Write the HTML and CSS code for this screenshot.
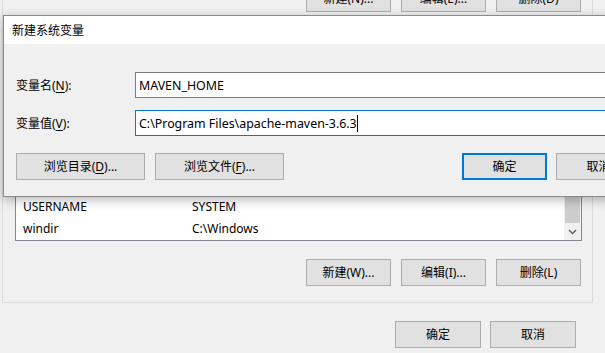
FILE: index.html
```html
<!DOCTYPE html>
<html lang="zh-CN">
<head>
<meta charset="utf-8">
<title>新建系统变量</title>
<link rel="stylesheet" href="styles.css">
</head>
<body>
<div class="window">
  <div class="group">
    <div class="btn-row top-row">
      <button class="btn">新建(N)...</button>
      <button class="btn">编辑(E)...</button>
      <button class="btn">删除(D)</button>
    </div>
    <div class="list">
      <div class="list-rows">
        <div class="row"><span class="c1">USERNAME</span><span class="c2">SYSTEM</span></div>
        <div class="row"><span class="c1">windir</span><span class="c2">C:\Windows</span></div>
      </div>
      <div class="scrollbar">
        <div class="thumb"></div>
        <div class="arrow">
          <svg width="9" height="6" viewBox="0 0 9 6"><polyline points="1,1 4.5,4.5 8,1" fill="none" stroke="#606060" stroke-width="1.5"/></svg>
        </div>
      </div>
    </div>
    <div class="btn-row mid-row">
      <button class="btn">新建(W)...</button>
      <button class="btn">编辑(I)...</button>
      <button class="btn">删除(L)</button>
    </div>
  </div>
  <div class="btn-row bottom-row">
    <button class="btn">确定</button>
    <button class="btn">取消</button>
  </div>
</div>

<div class="dialog">
  <div class="title">新建系统变量</div>
  <div class="dialog-body">
    <div class="field">
      <label class="label">变量名(<u>N</u>):</label>
      <div class="input">MAVEN_HOME</div>
    </div>
    <div class="field">
      <label class="label">变量值(<u>V</u>):</label>
      <div class="input focused">C:\Program Files\apache-maven-3.6.3<span class="caret"></span></div>
    </div>
    <div class="dialog-buttons">
      <div class="left-buttons">
        <button class="btn wide">浏览目录(<u>D</u>)...</button>
        <button class="btn wide">浏览文件(<u>F</u>)...</button>
      </div>
      <div class="right-buttons">
        <button class="btn default">确定</button>
        <button class="btn">取消</button>
      </div>
    </div>
  </div>
</div>
</body>
</html>
```

FILE: styles.css
```css
html, body {
  margin: 0;
  padding: 0;
  overflow: hidden;
}
body {
  width: 605px;
  height: 353px;
  background: #f0f0f0;
  position: relative;
  font-family: "Noto Sans", "Noto Sans CJK SC", sans-serif;
  font-size: 12px;
  color: #000;
}
.window {
  padding: 1px 12px 0 2px;
}
.group {
  margin-top: -41px;
  border: 1px solid #dcdcdc;
  padding: 24px 11px 16px 12px;
}
.btn-row {
  display: flex;
  justify-content: flex-end;
  gap: 10px;
}
.btn {
  box-sizing: border-box;
  height: 27px;
  width: 85px;
  background: #e1e1e1;
  border: 1px solid #adadad;
  font-family: inherit;
  font-size: 12px;
  color: #000;
  padding: 0;
  line-height: 1;
  margin: 0;
}
.list {
  margin-top: 10px;
  margin-right: -1px;
  height: 219px;
  box-sizing: border-box;
  border: 1px solid #828790;
  background: #fff;
  display: flex;
}
.list-rows {
  flex: 1;
  display: flex;
  flex-direction: column;
  justify-content: flex-end;
  padding-bottom: 1px;
}
.row {
  height: 22px;
  display: flex;
  align-items: center;
}
.c1 {
  width: 169px;
  padding-left: 7px;
}
.scrollbar {
  width: 17px;
  background: #f0f0f0;
  display: flex;
  flex-direction: column;
  justify-content: flex-end;
}
.thumb {
  flex: 1;
  margin: 0 1px;
  background: #cdcdcd;
}
.arrow {
  height: 17px;
  display: flex;
  align-items: center;
  justify-content: center;
}
.mid-row {
  margin-top: 18px;
}
.bottom-row {
  margin-top: 18px;
  margin-right: 17px;
  gap: 9px;
}
.bottom-row .btn {
  width: 86px;
}

.dialog {
  position: absolute;
  left: 3px;
  top: 15px;
  width: 651px;
  box-sizing: border-box;
  border: 1px solid #8a8a8a;
  background: #f0f0f0;
  box-shadow: 0 3px 10px rgba(0, 0, 0, 0.28);
}
.title {
  height: 28px;
  background: #fff;
  padding-left: 8px;
  display: flex;
  align-items: center;
}
.dialog-body {
  padding: 28px 12px 16px 12px;
}
.field {
  display: flex;
  align-items: center;
  margin-bottom: 12px;
}
.label {
  width: 119px;
}
.input {
  box-sizing: border-box;
  flex: 1;
  height: 26px;
  border: 1px solid #7a7a7a;
  background: #fff;
  padding-left: 3px;
  display: flex;
  align-items: center;
  white-space: pre;
  font-size: 12.4px;
}
.input.focused {
  border-color: #0078d7;
}
.caret {
  display: inline-block;
  width: 1px;
  height: 17px;
  background: #000;
}
.dialog-buttons {
  margin-top: 17px;
  display: flex;
  justify-content: space-between;
}
.left-buttons, .right-buttons {
  display: flex;
  gap: 10px;
}
.right-buttons {
  gap: 9px;
}
.btn.wide {
  width: 129px;
}
.btn.default {
  border: 2px solid #0078d7;
}
u {
  text-decoration: underline;
  text-underline-offset: 2px;
}
```
